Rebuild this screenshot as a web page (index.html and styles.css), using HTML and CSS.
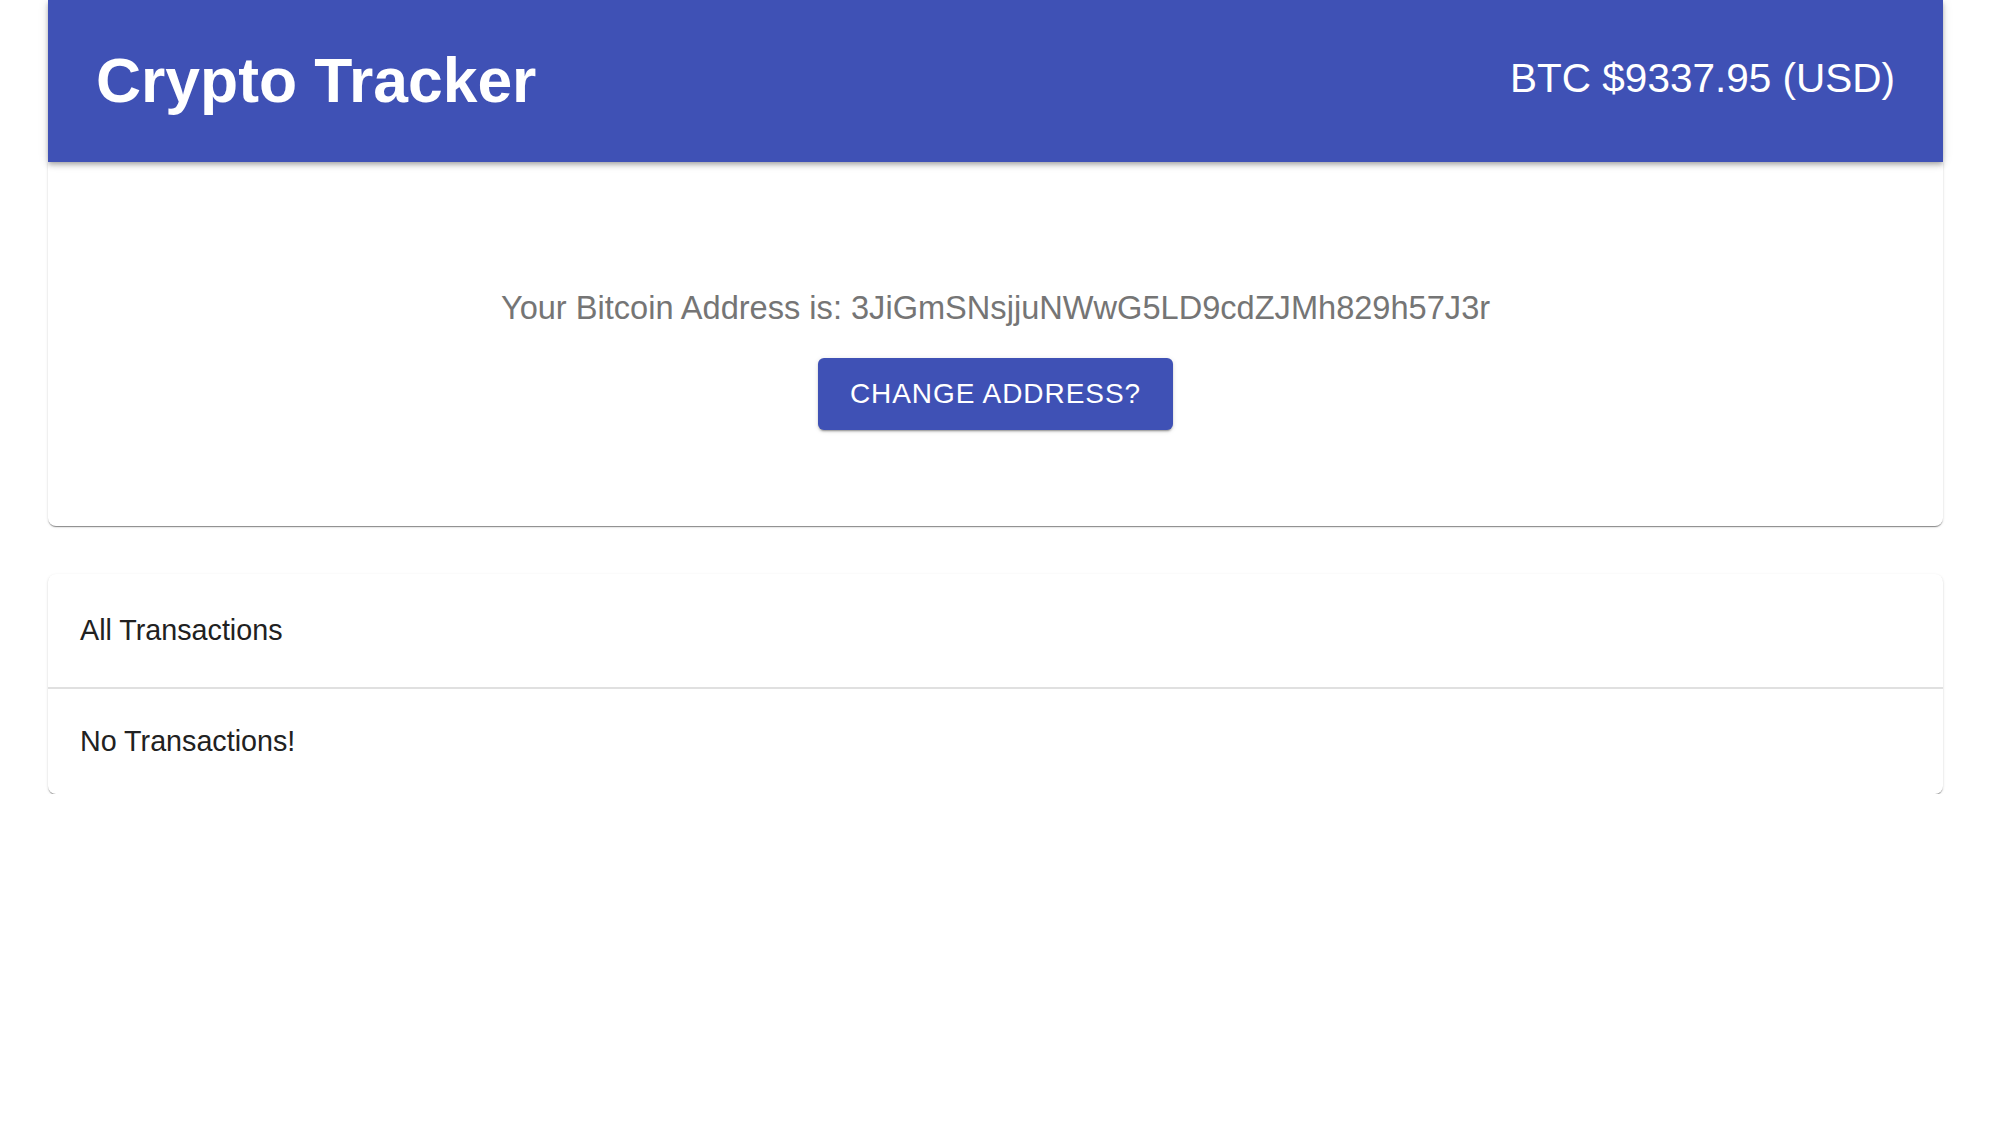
FILE: index.html
```html
<!DOCTYPE html>
<html lang="en">
<head>
<meta charset="utf-8">
<title>Crypto Tracker</title>
<link rel="stylesheet" href="styles.css">
</head>
<body>
<div class="page">
  <header class="appbar">
    <h1 class="title">Crypto Tracker</h1>
    <div class="price">BTC $9337.95 (USD)</div>
  </header>
  <section class="card address-card">
    <p class="address">Your Bitcoin Address is: 3JiGmSNsjjuNWwG5LD9cdZJMh829h57J3r</p>
    <button class="btn">CHANGE ADDRESS?</button>
  </section>
  <section class="card tx-card">
    <div class="tx-row tx-head">All Transactions</div>
    <div class="tx-row tx-body">No Transactions!</div>
  </section>
</div>
</body>
</html>
```

FILE: styles.css
```css
html, body {
  margin: 0;
  padding: 0;
  background: #ffffff;
  font-family: "Liberation Sans", Arial, Helvetica, sans-serif;
}

.page {
  padding: 0 47px 0 48px;
  display: flex;
  flex-direction: column;
}

.appbar {
  position: relative;
  z-index: 2;
  height: 162px;
  background: #3f51b5;
  color: #ffffff;
  display: flex;
  align-items: center;
  justify-content: space-between;
  padding: 0 48px 0 48px;
  box-sizing: border-box;
  box-shadow: 0 2px 4px -1px rgba(0,0,0,0.2), 0 4px 5px 0 rgba(0,0,0,0.14), 0 1px 10px 0 rgba(0,0,0,0.12);
}

.title {
  margin: 0;
  font-size: 62.4px;
  font-weight: 700;
  line-height: 1;
}

.price {
  font-size: 40.5px;
  font-weight: 400;
  line-height: 1;
  margin-top: -6px;
}

.card {
  background: #ffffff;
  border-radius: 0 0 8px 8px;
  box-shadow: 0 2px 1px -1px rgba(0,0,0,0.3), 0 1px 1px 0 rgba(0,0,0,0.16), 0 1px 3px 0 rgba(0,0,0,0.12);
}

.address-card {
  display: flex;
  flex-direction: column;
  align-items: center;
  padding: 122px 0 96px;
}

.address {
  margin: 0 0 26px;
  font-size: 32.6px;
  line-height: 48px;
  color: #757575;
}

.btn {
  font-family: "Liberation Sans", Arial, Helvetica, sans-serif;
  font-size: 28px;
  letter-spacing: 0.95px;
  font-weight: 400;
  color: #ffffff;
  background: #3f51b5;
  border: none;
  border-radius: 6px;
  height: 72px;
  padding: 0 32px;
  box-shadow: 0 3px 1px -2px rgba(0,0,0,0.2), 0 2px 2px 0 rgba(0,0,0,0.14), 0 1px 5px 0 rgba(0,0,0,0.12);
}

.tx-card {
  margin-top: 48px;
  border-radius: 8px;
}

.tx-row {
  padding: 0 32px;
  font-size: 28.7px;
  line-height: 49px;
  color: #212121;
}

.tx-head {
  padding-top: 32px;
  padding-bottom: 32px;
  border-bottom: 2px solid #e0e0e0;
}

.tx-body {
  padding-top: 28px;
  padding-bottom: 28px;
}
```
